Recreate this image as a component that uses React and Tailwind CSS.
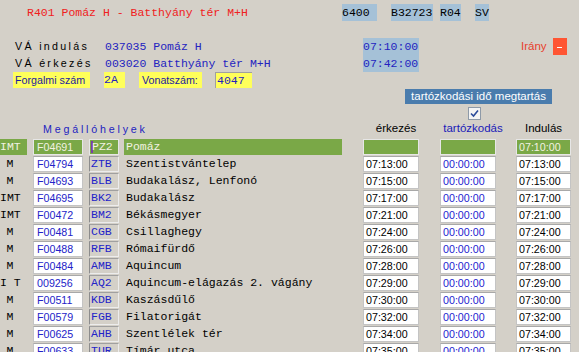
import React from 'react';

const mono = "font-['Liberation_Mono','Courier_New',monospace] text-[11.5px]";
const sans = "font-['Liberation_Sans',Arial,sans-serif]";

const stops = [
  ['IMT', 'F04691', 'PZ2', 'Pomáz', '', '', '07:10:00', true],
  ['M', 'F04794', 'ZTB', 'Szentistvántelep', '07:13:00', '00:00:00', '07:13:00'],
  ['M', 'F04693', 'BLB', 'Budakalász, Lenfonó', '07:15:00', '00:00:00', '07:15:00'],
  ['IMT', 'F04695', 'BK2', 'Budakalász', '07:17:00', '00:00:00', '07:17:00'],
  ['IMT', 'F00472', 'BM2', 'Békásmegyer', '07:21:00', '00:00:00', '07:21:00'],
  ['M', 'F00481', 'CGB', 'Csillaghegy', '07:24:00', '00:00:00', '07:24:00'],
  ['M', 'F00488', 'RFB', 'Rómaifürdő', '07:26:00', '00:00:00', '07:26:00'],
  ['M', 'F00484', 'AMB', 'Aquincum', '07:28:00', '00:00:00', '07:28:00'],
  ['I T', '009256', 'AQ2', 'Aquincum-elágazás 2. vágány', '07:29:00', '00:00:00', '07:29:00'],
  ['M', 'F00511', 'KDB', 'Kaszásdűlő', '07:30:00', '00:00:00', '07:30:00'],
  ['M', 'F00579', 'FGB', 'Filatorigát', '07:32:00', '00:00:00', '07:32:00'],
  ['M', 'F00625', 'AHB', 'Szentlélek tér', '07:34:00', '00:00:00', '07:34:00'],
  ['M', 'F00633', 'TUR', 'Tímár utca', '07:35:00', '00:00:00', '07:35:00'],
];

function StopRow({ stop }) {
  const [type, code, short, name, arr, dwell, dep, sel] = stop;
  const field = sel
    ? 'bg-[#7aa847] text-[#f2f2e2] border-[#e6e6e6]'
    : 'bg-white border-[#c4c4c4] border-t-[#a8a8a8]';

  return (
    <div className="flex h-[17px] items-start shrink-0">
      <div className={`w-[27px] h-[16px] flex items-center ${mono} ${sel ? 'bg-[#7aa847] text-[#f2f2e2]' : 'text-black'}`}>
        <span className="w-[20px] text-center whitespace-pre">{type}</span>
      </div>
      <div className={`ml-[6px] w-[50px] h-[16px] border pl-[3px] flex items-center ${sans} text-[10.7px] ${field} ${sel ? '' : 'text-[#2323c8]'}`}>
        {code}
      </div>
      <div className={`ml-[6px] w-[30px] h-[16px] border flex items-center pl-[1px] ${mono} ${sel ? 'bg-[#7aa847] text-[#f2f2e2] border-[#e6e6e6]' : 'text-[#2323c8] border-[#ececec] border-l-[#8c8c8c] border-t-[#a0a0a0]'}`}>
        {sel && <span className="w-[2px] h-[12px] bg-[#7a3fa8] mr-[-1px]" />}
        {short}
      </div>
      <div className={`ml-[5px] w-[218px] h-[16px] flex items-center pl-[2px] whitespace-pre ${mono} ${sel ? 'bg-[#7aa847] text-[#f2f2e2]' : 'text-black'}`}>
        {name}
      </div>
      <div className={`ml-[21px] w-[56px] h-[16px] border pl-[2px] flex items-center ${sans} text-[10.7px] ${field}`}>
        {arr}
      </div>
      <div className={`ml-[21px] w-[56px] h-[16px] border pl-[2px] flex items-center ${sans} text-[10.7px] ${field} ${sel ? '' : 'text-[#2323d0]'}`}>
        {dwell}
      </div>
      <div className={`ml-[20px] w-[55px] h-[16px] border pl-[2px] flex items-center ${sans} text-[10.7px] ${field}`}>
        {dep}
      </div>
    </div>
  );
}

export default function App() {
  return (
    <div className="w-[579px] h-[352px] overflow-hidden bg-[#d4d0c8] flex flex-col text-black">
      {/* header line */}
      <div className="flex items-center h-[17px] mt-[4px] shrink-0">
        <div className={`w-[342px] pl-[27px] text-[#f02020] whitespace-pre ${mono}`}>R401 Pomáz H - Batthyány tér M+H</div>
        <div className={`w-[35px] h-[17px] bg-[#a5c1d7] flex items-center ${mono}`}>6400</div>
        <div className={`ml-[14px] w-[42px] h-[17px] bg-[#a5c1d7] flex items-center ${mono}`}>B32723</div>
        <div className={`ml-[7px] w-[21px] h-[17px] bg-[#a5c1d7] flex items-center ${mono}`}>R04</div>
        <div className={`ml-[14px] w-[14px] h-[17px] bg-[#a5c1d7] flex items-center ${mono}`}>SV</div>
      </div>

      {/* VÁ block */}
      <div className="flex mt-[17px] h-[34px] shrink-0">
        <div className="w-[363px] flex flex-col">
          <div className="flex items-center h-[17px]">
            <span className={`w-[105px] pl-[15px] ${sans} text-[10.7px] tracking-[2.3px]`}>VÁ indulás</span>
            <span className={`text-[#2323c0] whitespace-pre ${mono}`}>037035 Pomáz H</span>
          </div>
          <div className="flex items-center h-[17px]">
            <span className={`w-[105px] pl-[15px] ${sans} text-[10.7px] tracking-[2.3px]`}>VÁ érkezés</span>
            <span className={`text-[#2323c0] whitespace-pre ${mono}`}>003020 Batthyány tér M+H</span>
          </div>
        </div>
        <div className={`w-[56px] h-[34px] bg-[#a5c1d7] text-[#2323c0] flex flex-col ${mono}`}>
          <span className="h-[17px] flex items-center">07:10:00</span>
          <span className="h-[17px] flex items-center">07:42:00</span>
        </div>
        <div className="ml-[102px] h-[17px] flex items-center">
          <span className={`text-[#e8402c] ${sans} text-[11.5px]`}>Irány</span>
          <div className="ml-[6px] w-[14px] h-[17px] bg-[#ff5533] flex items-center justify-center">
            <div className="w-[5px] h-[1px] bg-white mt-[2px]" />
          </div>
        </div>
      </div>

      {/* Forgalmi szám row */}
      <div className={`flex h-[16px] shrink-0 ${sans} text-[10.7px]`}>
        <div className="ml-[13px] w-[77px] bg-[#ffff5a] text-[#1a1aa0] pl-[2px] flex items-center">Forgalmi szám</div>
        <div className={`ml-[14px] w-[21px] bg-[#ffff5a] text-[#2323c0] flex items-center ${mono}`}>2A</div>
        <div className="ml-[14px] w-[63px] bg-[#ffff5a] text-[#1a1aa0] pl-[3px] flex items-center">Vonatszám:</div>
        <div className={`ml-[13px] w-[37px] bg-[#ffff5a] border-t border-l border-[#a0a0a0] text-[#2323c0] pl-[1px] flex items-center ${mono}`}>4047</div>
      </div>

      {/* tartózkodási idő */}
      <div className="flex mt-[1px] h-[15px] shrink-0">
        <div className={`ml-[405px] w-[147px] bg-[#4a7cad] text-white flex items-center justify-center ${sans} text-[11.5px]`}>
          tartózkodási idő megtartás
        </div>
      </div>
      <div className="flex mt-[3px] h-[13px] shrink-0">
        <div className="ml-[468px] w-[13px] h-[13px] border border-[#8e9aa8] bg-[#f4f4f4] flex items-center justify-center">
          <svg width="9" height="9" viewBox="0 0 9 9">
            <path d="M1 4.5 L3.5 7 L8 1.5" fill="none" stroke="#2a4a9a" strokeWidth="1.6" />
          </svg>
        </div>
      </div>

      {/* column headers */}
      <div className={`flex items-center h-[16px] mt-[1px] shrink-0 ${sans}`}>
        <span className="ml-[43px] w-[320px] text-[#2323c0] text-[10.7px] tracking-[2.8px]">Megállóhelyek</span>
        <span className="w-[56px] text-center text-[11.5px] pl-[10px]">érkezés</span>
        <span className="ml-[21px] w-[66px] text-center text-[11.5px] text-[#1a1ab8]">tartózkodás</span>
        <span className="ml-[10px] w-[55px] text-center text-[11.5px]">Indulás</span>
      </div>

      <div className="flex flex-col mt-[2px]">
        {stops.map((s) => (
          <StopRow key={s[1]} stop={s} />
        ))}
      </div>
    </div>
  );
}
